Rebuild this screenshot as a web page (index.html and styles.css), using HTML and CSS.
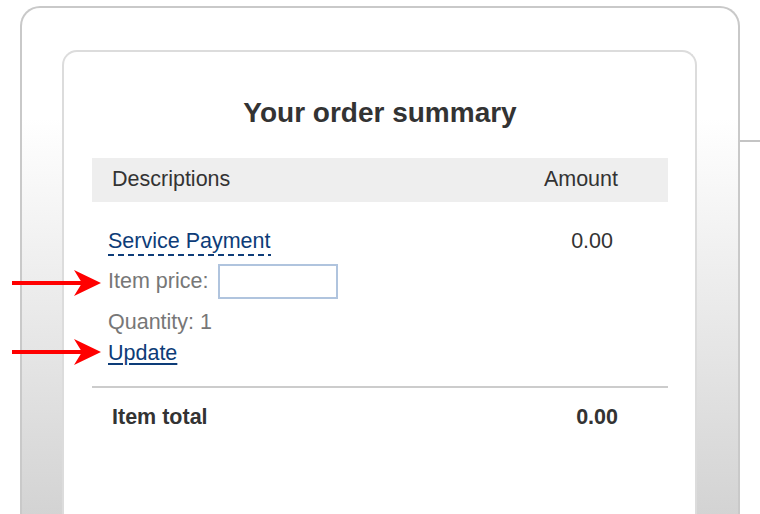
FILE: index.html
```html
<!DOCTYPE html>
<html lang="en">
<head>
<meta charset="utf-8">
<title>Your order summary</title>
<link rel="stylesheet" href="styles.css">
</head>
<body>
<div class="page">
  <div class="frame">
    <div class="summary">
      <h1 class="title">Your order summary</h1>
      <div class="table-head">
        <span>Descriptions</span>
        <span>Amount</span>
      </div>
      <div class="item">
        <div class="item-info">
          <div class="item-name"><a class="dashed" href="#">Service Payment</a></div>
          <div class="price-row">
            <label class="muted" for="price">Item price:</label>
            <input class="price-input" id="price" type="text">
          </div>
          <div class="qty muted">Quantity: 1</div>
          <div class="update-row"><a class="update" href="#">Update</a></div>
        </div>
        <div class="item-amount">0.00</div>
      </div>
      <div class="divider"></div>
      <div class="total">
        <span>Item total</span>
        <span>0.00</span>
      </div>
    </div>
  </div>
  <div class="side-rule"></div>
</div>
<svg class="arrow arrow-price" width="92" height="28" viewBox="0 0 92 28" aria-hidden="true">
  <rect x="0" y="12" width="72" height="4" fill="#f00"/>
  <polygon points="62,1 89,14 62,27 70,14" fill="#f00"/>
</svg>
<svg class="arrow arrow-update" width="92" height="28" viewBox="0 0 92 28" aria-hidden="true">
  <rect x="0" y="12" width="72" height="4" fill="#f00"/>
  <polygon points="62,1 89,14 62,27 70,14" fill="#f00"/>
</svg>
</body>
</html>
```

FILE: styles.css
```css
html, body {
  margin: 0;
  padding: 0;
}

body {
  width: 760px;
  height: 514px;
  overflow: hidden;
  background: #fff;
  font-family: "Liberation Sans", Arial, Helvetica, sans-serif;
  color: #333;
  position: relative;
}

.page {
  display: flex;
  align-items: flex-start;
  padding: 6px 0 0 20px;
}

.frame {
  flex: none;
  box-sizing: border-box;
  width: 720px;
  height: 508px;
  border: 2px solid #c9c9c9;
  border-bottom: none;
  border-radius: 20px 20px 0 0;
  background: linear-gradient(to bottom, #ffffff 0, #ffffff 110px, #d3d3d3 508px);
  padding: 42px 41px 0 40px;
}

.side-rule {
  flex: 1;
  height: 0;
  margin-top: 134px;
  border-top: 2px solid #c4c4c4;
}

.summary {
  box-sizing: border-box;
  height: 464px;
  background: #fff;
  border: 2px solid #dcdcdc;
  border-bottom: none;
  border-radius: 15px 15px 0 0;
  padding: 0 27px 0 28px;
}

.title {
  margin: 45px 0 0;
  font-size: 28px;
  line-height: 32px;
  font-weight: bold;
  text-align: center;
  color: #333;
}

.table-head {
  margin-top: 29px;
  height: 44px;
  box-sizing: border-box;
  padding: 0 50px 2px 20px;
  background: #eee;
  display: flex;
  justify-content: space-between;
  align-items: center;
  font-size: 21.5px;
  line-height: 25px;
}

.item {
  margin-top: 27px;
  display: flex;
  justify-content: space-between;
  align-items: flex-start;
  padding: 0 55px 0 16px;
  font-size: 21.5px;
  line-height: 25px;
}

.item-name a,
.update {
  color: #0d3c78;
}

.dashed {
  text-decoration: none;
  padding-bottom: 3px;
  background-image: linear-gradient(to right, #0d3c78 0, #0d3c78 6px, transparent 6px);
  background-size: 10px 2px;
  background-repeat: repeat-x;
  background-position: 0 100%;
}

.muted {
  color: #777;
}

.price-row {
  margin-top: 10px;
  display: flex;
  align-items: center;
  gap: 10px;
}

.price-input {
  box-sizing: border-box;
  width: 120px;
  height: 35px;
  margin: 0;
  padding: 0 4px;
  border: 2px solid #b0c4de;
  border-radius: 0;
  background: #fff;
  font: inherit;
  outline: none;
}

.qty {
  margin-top: 11px;
}

.update-row {
  margin-top: 6px;
}

.update {
  text-decoration: underline;
  text-decoration-thickness: 2px;
  text-underline-offset: 3px;
}

.item-amount {
  color: #333;
}

.divider {
  margin-top: 20px;
  border-top: 2px solid #ccc;
}

.total {
  margin-top: 17px;
  display: flex;
  justify-content: space-between;
  padding: 0 50px 0 20px;
  font-size: 21.5px;
  line-height: 25px;
  font-weight: bold;
  color: #333;
}

.arrow {
  position: absolute;
  left: 12px;
}

.arrow-price {
  top: 269px;
}

.arrow-update {
  top: 338px;
}
```
